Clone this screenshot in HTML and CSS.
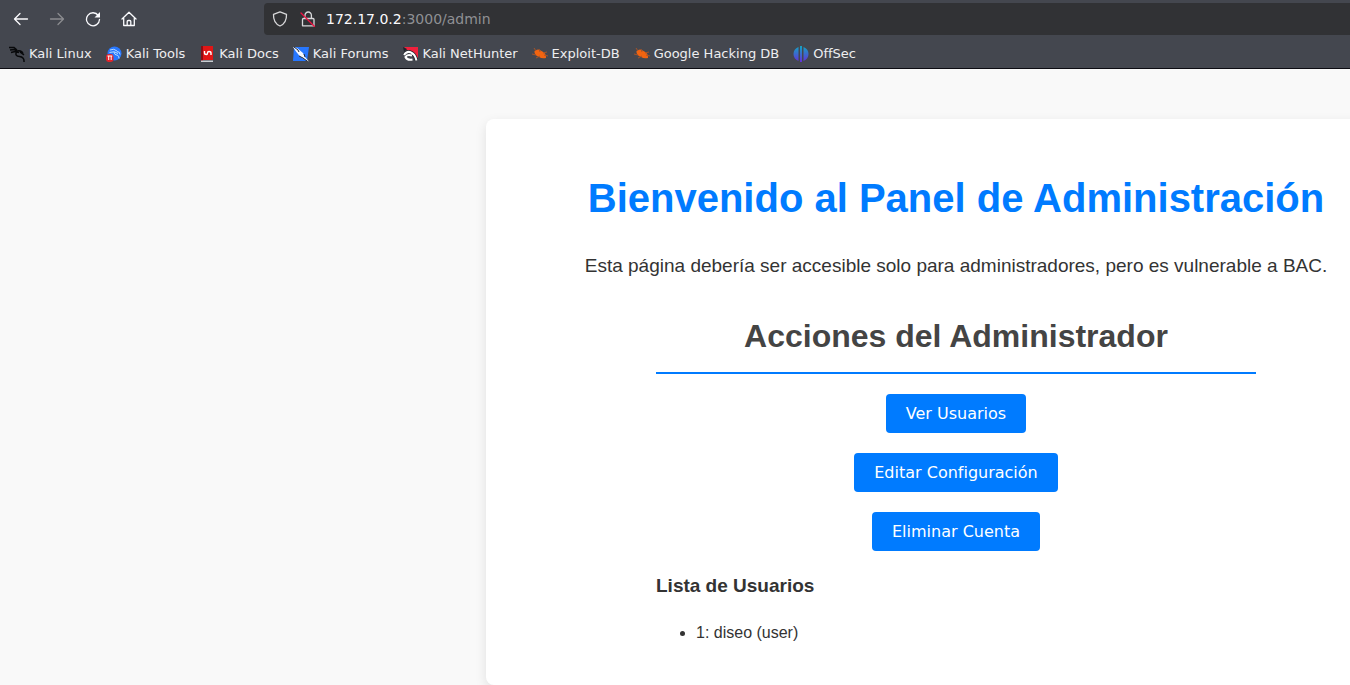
FILE: index.html
```html
<!DOCTYPE html>
<html lang="es">
<head>
<meta charset="utf-8">
<title>Panel de Administración</title>
<link rel="stylesheet" href="styles.css">
</head>
<body>
<header class="browser">
  <div class="toolbar">
    <nav class="nav-buttons" aria-label="Navegación">
      <button class="nav-button" type="button" aria-label="Atrás"><svg viewBox="0 0 16 16"><path d="M14.500 8H2M7 2.500 1.500 8 7 13.500"/></svg></button>
      <button class="nav-button" type="button" aria-label="Adelante" disabled><svg viewBox="0 0 16 16"><path d="M1.500 8H14M9 2.500 14.500 8 9 13.500"/></svg></button>
      <button class="nav-button" type="button" aria-label="Recargar"><svg viewBox="0 0 16 16"><path d="M13.300 4.500A6.500 6.500 0 1 0 14.500 8.500"/><path class="solid" d="M15 1v5.500H9.500z"/></svg></button>
      <button class="nav-button" type="button" aria-label="Inicio"><svg viewBox="0 0 16 16"><path d="M1 8 8 1.300 15 8M2.700 7v7.500h10.600V7M6.200 14.500v-4q0-1 1-1h1.600q1 0 1 1v4"/></svg></button>
    </nav>
    <div class="address">
      <svg class="address-icon" viewBox="0 0 16 16"><path d="M8 .9 14.500 3.400C14.700 8.500 12.800 13 8 15 3.200 13 1.300 8.500 1.500 3.400z"/></svg>
      <svg class="address-icon" viewBox="0 0 16 16"><path d="M5 7.500V4.200a3.200 3.200 0 0 1 6.400 0V7.500M3.500 7.500h9.500q1 0 1 1V14.800H2.500V8.500q0-1 1-1z"/><path class="slash" d="M1 2 14.500 15.500"/></svg>
      <p class="url"><span class="host">172.17.0.2</span>:3000/admin</p>
    </div>
  </div>
  <nav class="bookmarks" aria-label="Marcadores">
    <a class="bookmark" href="#"><svg viewBox="0 0 16 16"><path class="dragon" d="M0 1.500 5 1.500 8 4M1 4 5 3.500 9 5.500M2 6.500l4-1 4 1M8 5q5-1 6 3M7.500 6q-2 4 3 4.500 5 .5 4.500 5.500M11 6l4 3"/></svg>Kali Linux</a>
    <a class="bookmark" href="#"><svg viewBox="0 0 16 16"><circle cx="8.500" cy="7.500" r="7" fill="#2777ff"/><path d="M4 4q4-2 7 1M3.500 6.500q5-2 8.500 1M8 6q0 3 4 3.500 1 1 1 3M11 5.500q3 0 3 3" fill="none" stroke="#b9dcff"/><rect y="8" width="7.500" height="8" rx="3" fill="#e3242b"/><path d="M1.500 10h4.800M2.700 10v4M5.200 10v4" fill="none" stroke="#fff"/></svg>Kali Tools</a>
    <a class="bookmark" href="#"><svg viewBox="0 0 16 16"><path d="M2 0h12v14H2z" fill="#e01616"/><path d="M2 0h2v15H2z" fill="#8c0c14"/><path d="M2 14.500h12V16H2z" fill="#c9cdd2"/><path d="M5.500 5v2q0 1.500 2 1.500 1 0 1-1.500T10 5.500q2 0 2 1.500v2" fill="none" stroke="#fff" stroke-width="1.400"/></svg>Kali Docs</a>
    <a class="bookmark" href="#"><svg viewBox="0 0 16 16"><path d="M1 1h15l-2 14H0z" fill="#2777ff"/><path d="M0 1 4 2l6 5 2 4 4 4.500-6-3-3-2-4-5z" fill="#f4f8ff"/><path d="M1 1 5 4l1 2M11 8l1 3M6 10l4 2 4 3" fill="none" stroke="#222a38"/></svg>Kali Forums</a>
    <a class="bookmark" href="#"><svg viewBox="0 0 16 16"><path d="M2 1h14v11L8 7z" fill="#f0203c"/><path d="m1 1 4 2-3 3z" fill="#20242b"/><path d="M2 9q3-5 7-2.500 4 1.500 5.500 8" fill="none" stroke="#20242b" stroke-width="3.500"/><path d="M10 9.500Q5 8 3.500 11 5 14.500 10.500 13.500M2 9q3-4.500 7-2.500 4 1.500 5.500 8" fill="none" stroke="#fff" stroke-width="2"/></svg>Kali NetHunter</a>
    <a class="bookmark" href="#"><svg viewBox="0 0 16 16"><path d="M2.500 5q3.500-3 7 0 5 2 4.500 7-4 1-7-1-5-2-4.500-6z" fill="#f26410"/><path d="M2 2 4 5M7 3l1 3M0 8l4 1M11 7l4-1M12 9l4 1M4 12l4-2" fill="none" stroke="#a85428"/></svg>Exploit-DB</a>
    <a class="bookmark" href="#"><svg viewBox="0 0 16 16"><path d="M2.500 5q3.500-3 7 0 5 2 4.500 7-4 1-7-1-5-2-4.500-6z" fill="#f26410"/><path d="M2 2 4 5M7 3l1 3M0 8l4 1M11 7l4-1M12 9l4 1M4 12l4-2" fill="none" stroke="#a85428"/></svg>Google Hacking DB</a>
    <a class="bookmark" href="#"><svg viewBox="0 0 16 16"><defs><linearGradient id="offsec" x1="0" y1="0" x2="0" y2="1"><stop offset="0" stop-color="#12a5c4"/><stop offset="1" stop-color="#6430d8"/></linearGradient></defs><path d="M5.500 1v14Q.5 13 .5 8t5-7M7 0h2v16H7zM10.500 1q5 2 5 7t-5 7z" fill="url(#offsec)"/></svg>OffSec</a>
  </nav>
</header>
<main class="page">
  <div class="card">
    <h1 class="title">Bienvenido al Panel de Administración</h1>
    <p class="intro">Esta página debería ser accesible solo para administradores, pero es vulnerable a BAC.</p>
    <section class="panel">
      <h2 class="panel-title">Acciones del Administrador</h2>
      <div class="actions">
        <button class="action" type="button">Ver Usuarios</button>
        <button class="action" type="button">Editar Configuración</button>
        <button class="action" type="button">Eliminar Cuenta</button>
      </div>
      <h3 class="list-title">Lista de Usuarios</h3>
      <ul class="users">
        <li>1: diseo (user)</li>
      </ul>
    </section>
  </div>
</main>
</body>
</html>
```
FILE: styles.css
```css
* { box-sizing: border-box; }

body {
  margin: 0;
  min-height: 100vh;
  overflow: hidden;
  background: #f9f9f9;
  color: #333;
  font-family: "Liberation Sans", Arial, sans-serif;
}

.browser {
  background: #44474f;
  border-bottom: 1px solid #0c0c12;
  font-family: "DejaVu Sans", sans-serif;
}

.toolbar {
  display: grid;
  grid-template-columns: 264px 1fr;
  padding-top: 3px;
}

.nav-buttons {
  display: flex;
  align-items: center;
  gap: 4px;
  padding-left: 5px;
}

.nav-button {
  display: grid;
  place-items: center;
  width: 32px;
  height: 32px;
  padding: 0;
  border: 0;
  background: none;
  color: #fbfbfe;
}

.nav-button:disabled { color: #8b8c90; }

.nav-button svg,
.address-icon {
  width: 16px;
  height: 16px;
  fill: none;
  stroke: currentColor;
  stroke-width: 1.3;
  stroke-linecap: round;
  stroke-linejoin: round;
}

.nav-button .solid { fill: currentColor; stroke: none; }

.address {
  display: flex;
  align-items: center;
  gap: 12px;
  height: 32px;
  padding-left: 8px;
  border-radius: 4px 0 0 4px;
  background: #313235;
  color: #d8d8da;
}

.address-icon .slash { stroke: #f01040; }

.url {
  margin: 0 0 0 -2px;
  color: #8f9094;
  font-size: 14px;
}

.host { color: #fbfbfe; }

.bookmarks {
  display: flex;
  align-items: center;
  gap: 14px;
  height: 33px;
  padding: 4px 9px 0;
}

.bookmark {
  display: flex;
  align-items: center;
  gap: 4px;
  color: #eeeef0;
  font-size: 13px;
  text-decoration: none;
  white-space: nowrap;
}

.bookmark svg { width: 16px; height: 16px; }

.dragon {
  fill: none;
  stroke: #08090b;
  stroke-width: 1.5;
}

.page {
  padding: 50px 0 0 36%;
}

.card {
  width: 940px;
  padding: 30px 20px;
  border-radius: 8px;
  background: #fff;
  box-shadow: 0 4px 12px rgba(0, 0, 0, 0.1);
}

.title {
  margin: 26px 0 32px;
  color: #007bff;
  font-size: 40px;
  line-height: 46px;
  text-align: center;
}

.intro {
  margin: 0 0 40px;
  font-size: 19px;
  line-height: 25px;
  text-align: center;
}

.panel {
  max-width: 600px;
  margin: 0 auto;
}

.panel-title {
  margin: 0 0 20px;
  padding-bottom: 18px;
  border-bottom: 2px solid #007bff;
  color: #444;
  font-size: 32px;
  line-height: 36px;
  text-align: center;
}

.actions {
  display: flex;
  flex-direction: column;
  align-items: center;
  gap: 20px;
}

.action {
  padding: 10px 20px;
  border: 0;
  border-radius: 4px;
  background: #007bff;
  color: #fff;
  font-family: "DejaVu Sans", sans-serif;
  font-size: 16px;
  line-height: 19px;
}

.list-title {
  margin: 24px 0 26px;
  font-size: 19px;
  line-height: 22px;
}

.users {
  margin: 0;
  padding: 0 0 12px 40px;
  font-size: 16px;
  line-height: 20px;
}
```
